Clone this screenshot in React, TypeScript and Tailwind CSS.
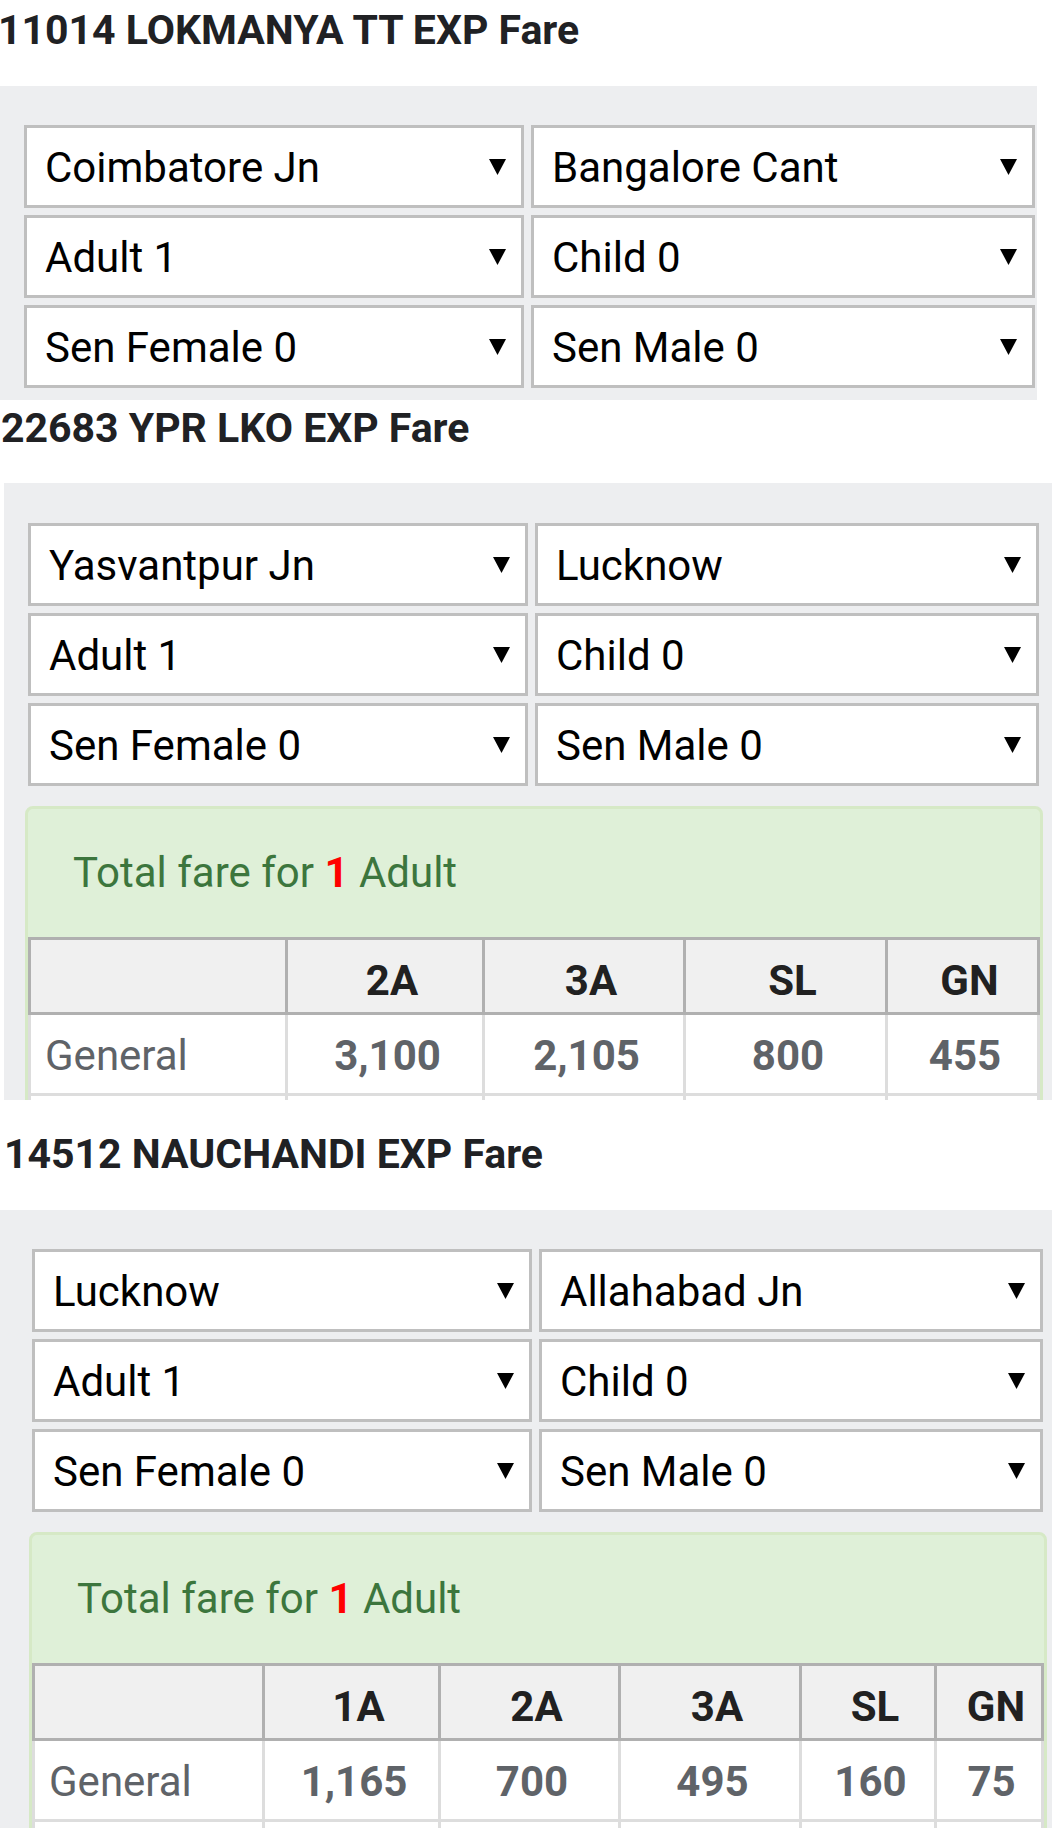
import React from "react";

const Arrow = () => (
  <svg width="17" height="17" viewBox="0 0 17 17" className="-mt-[3px] shrink-0">
    <polygon points="0,1 17,1 8.5,17" fill="#000" />
  </svg>
);

const SelectBox = ({ label }: { label: string }) => (
  <div className="flex h-[83px] items-center justify-between border-[3px] border-[#bfbfbf] bg-white pl-[18px] pr-[15px] pt-[3px]">
    <span className="text-[42px] leading-[42px] text-black">{label}</span>
    <Arrow />
  </div>
);

const Selects = ({ from, to }: { from: string; to: string }) => (
  <div className="grid grid-cols-[500px_504px] gap-[7px]">
    <SelectBox label={from} />
    <SelectBox label={to} />
    <SelectBox label="Adult 1" />
    <SelectBox label="Child 0" />
    <SelectBox label="Sen Female 0" />
    <SelectBox label="Sen Male 0" />
  </div>
);

const Title = ({ text, ml }: { text: string; ml: string }) => (
  <div className="h-[86px] pt-[5px]">
    <div className={`${ml} whitespace-nowrap text-[41px] font-bold leading-[50px] text-[#202124]`}>{text}</div>
  </div>
);

type FareProps = { cols: string[]; widths: number[]; values: string[] };

const FareBox = ({ cols, widths, values }: FareProps) => (
  <div className="mt-[20px] w-[1018px] overflow-hidden rounded-t-[8px] border-[3px] border-[#d6e9c6] bg-[#dff0d8]">
    <div className="flex h-[128px] items-center pl-[45px]">
      <span className="text-[42px] leading-[42px] text-[#3c763d]">
        Total fare for <span className="font-bold text-[#ff0000]">1</span> Adult
      </span>
    </div>
    <div className="bg-white">
      <div className="flex">
        <div
          className="h-[78px] shrink-0 border-y-[3px] border-l-[3px] border-[#b0b0b0] bg-[#f0f0f0]"
          style={{ width: widths[0] }}
        />
        {cols.map((c, i) => {
          const last = i === cols.length - 1;
          return (
            <div
              key={c}
              className={
                last
                  ? "h-[78px] flex-1 border-[3px] border-[#b0b0b0] bg-[#f0f0f0] pl-[14px] pt-[20px] text-center text-[42px] font-bold leading-[42px] text-[#212121]"
                  : "h-[78px] shrink-0 border-y-[3px] border-l-[3px] border-[#b0b0b0] bg-[#f0f0f0] pl-[14px] pt-[20px] text-center text-[42px] font-bold leading-[42px] text-[#212121]"
              }
              style={last ? undefined : { width: widths[i + 1] }}
            >
              {c}
            </div>
          );
        })}
      </div>
      {[values, values.map(() => "")].map((row, r) => (
        <div className="flex" key={r}>
          <div
            className="h-[81px] shrink-0 border-b-[3px] border-l-[3px] border-[#dddddd] pl-[14px] pt-[20px] text-[42px] leading-[42px] text-[#5f6368]"
            style={{ width: widths[0] }}
          >
            {r === 0 ? "General" : ""}
          </div>
          {row.map((v, i) => {
            const last = i === row.length - 1;
            return (
              <div
                key={i}
                className={
                  last
                    ? "h-[81px] flex-1 border-x-[3px] border-b-[3px] border-[#dddddd] pl-[5px] pt-[20px] text-center text-[42px] font-bold leading-[42px] text-[#5f6368]"
                    : "h-[81px] shrink-0 border-b-[3px] border-l-[3px] border-[#dddddd] pl-[5px] pt-[20px] text-center text-[42px] font-bold leading-[42px] text-[#5f6368]"
                }
                style={last ? undefined : { width: widths[i + 1] }}
              >
                {v}
              </div>
            );
          })}
        </div>
      ))}
    </div>
  </div>
);

export default function App() {
  return (
    <div
      className="h-[1828px] w-[1052px] overflow-hidden bg-white"
      style={{ fontFamily: "Roboto, 'Noto Sans', Arial, sans-serif" }}
    >
      <section>
        <Title text="11014 LOKMANYA TT EXP Fare" ml="-ml-[2px]" />
        <div className="w-[1037px] bg-[#edeef0] pb-[12px] pl-[24px] pt-[39px]">
          <Selects from="Coimbatore Jn" to="Bangalore Cant" />
        </div>
      </section>

      <section className="h-[700px] overflow-hidden">
        <div className="h-[83px] pt-[3px]">
          <div className="ml-[1px] whitespace-nowrap text-[41px] font-bold leading-[50px] text-[#202124]">
            22683 YPR LKO EXP Fare
          </div>
        </div>
        <div className="ml-[4px] bg-[#edeef0] pb-[20px] pl-[21px] pt-[40px]">
          <div className="ml-[3px]">
            <Selects from="Yasvantpur Jn" to="Lucknow" />
          </div>
          <FareBox
            cols={["2A", "3A", "SL", "GN"]}
            widths={[257, 197, 201, 202]}
            values={["3,100", "2,105", "800", "455"]}
          />
        </div>
      </section>

      <section className="mt-[24px]">
        <Title text="14512 NAUCHANDI EXP Fare" ml="ml-[4px]" />
        <div className="bg-[#edeef0] pb-[20px] pl-[29px] pt-[39px]">
          <div className="ml-[3px]">
            <Selects from="Lucknow" to="Allahabad Jn" />
          </div>
          <FareBox
            cols={["1A", "2A", "3A", "SL", "GN"]}
            widths={[230, 176, 180, 181, 135]}
            values={["1,165", "700", "495", "160", "75"]}
          />
        </div>
      </section>
    </div>
  );
}
